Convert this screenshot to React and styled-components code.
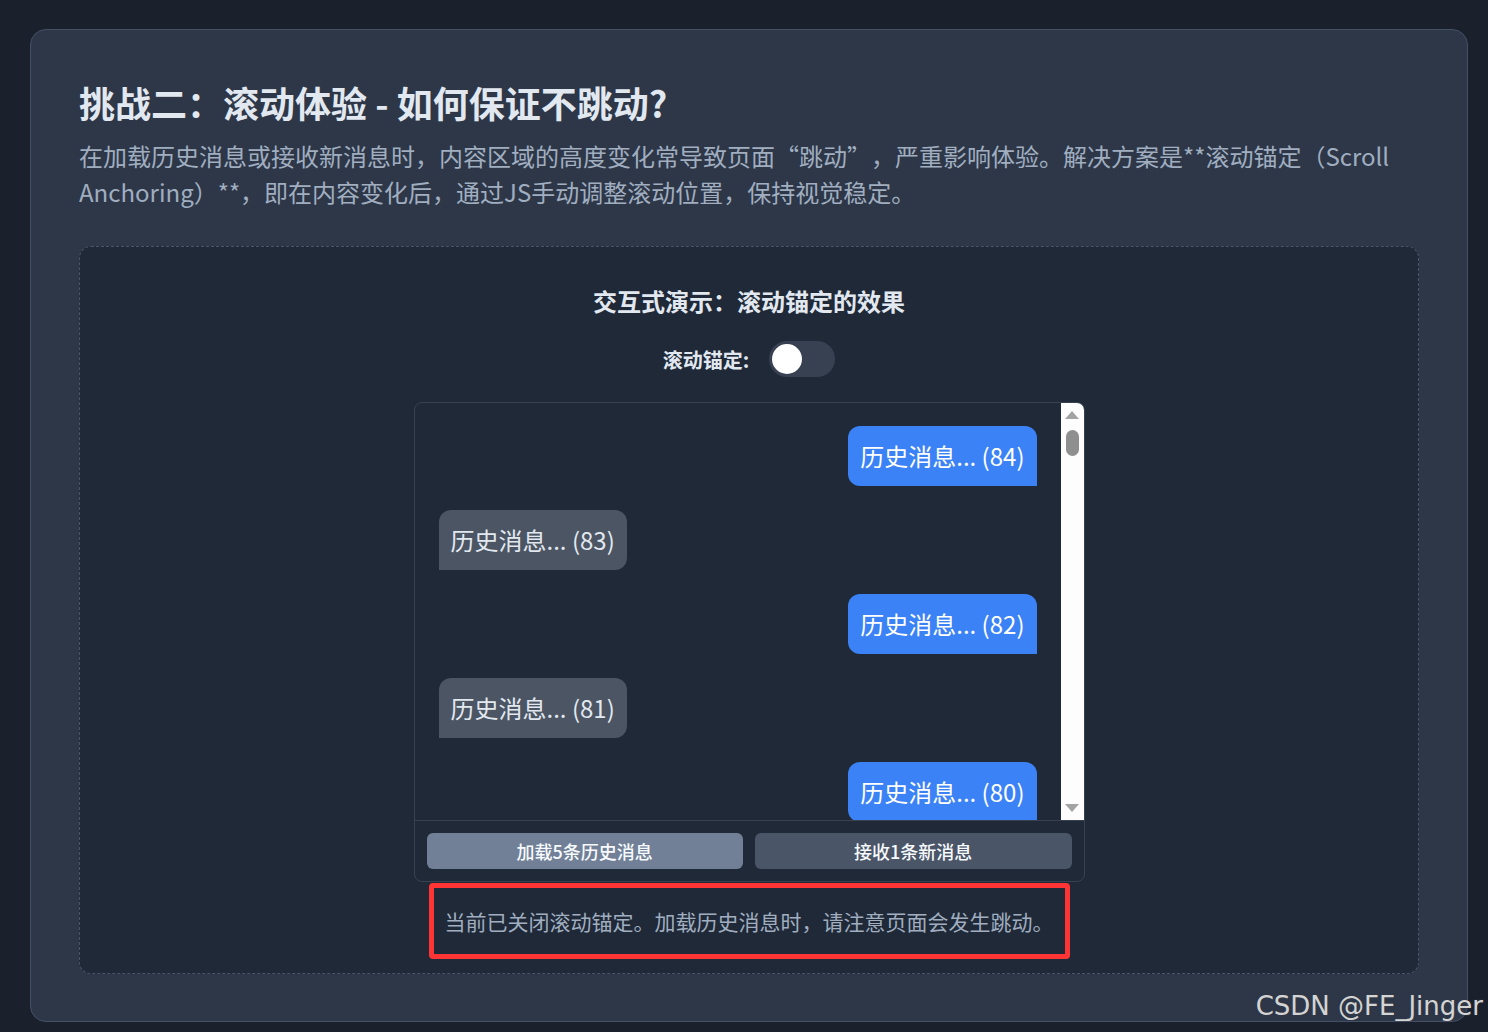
import React, { useState } from 'react'
import styled, { createGlobalStyle } from 'styled-components'

const GlobalStyle = createGlobalStyle`
  html, body {
    margin: 0;
    padding: 0;
    background: #1a202c;
    font-family: "Noto Sans CJK SC", "Noto Sans", sans-serif;
    text-spacing-trim: space-all;
  }
  * { box-sizing: border-box; }
`

const Page = styled.div`
  min-height: 1032px;
  padding: 29px 20px 10px 30px;
  position: relative;
`

const Card = styled.section`
  background: #2d3748;
  border: 1px solid #445066;
  border-radius: 16px;
  padding: 47px 48px 48px;
  height: 993px;
`

const Title = styled.h2`
  margin: 0 0 10px;
  font-size: 36px;
  line-height: 51px;
  font-weight: 700;
  color: #e2e8f0;
`

const Intro = styled.p`
  margin: 0 0 36px;
  font-size: 24px;
  line-height: 36px;
  color: #a0aec0;
`

const Demo = styled.div`
  border: 1px dashed #4a5568;
  border-radius: 12px;
  background: #1f2937;
  padding: 36px 24px 14px;
  display: flex;
  flex-direction: column;
  align-items: center;
`

const DemoTitle = styled.h3`
  margin: 0 0 22px;
  font-size: 24px;
  line-height: 36px;
  font-weight: 700;
  color: #e2e8f0;
`

const ToggleRow = styled.div`
  display: flex;
  align-items: center;
  gap: 20px;
  margin-bottom: 25px;
`

const ToggleLabel = styled.span`
  font-size: 20px;
  font-weight: 700;
  color: #e2e8f0;
`

const Switch = styled.button`
  width: 66px;
  height: 36px;
  border: none;
  border-radius: 18px;
  padding: 3px;
  background: ${p => (p.$on ? '#3b82f6' : '#374151')};
  display: flex;
  justify-content: ${p => (p.$on ? 'flex-end' : 'flex-start')};
  cursor: pointer;
`

const Knob = styled.span`
  width: 30px;
  height: 30px;
  border-radius: 50%;
  background: #ffffff;
`

const Chat = styled.div`
  width: 671px;
  border: 1px solid #374151;
  border-radius: 8px;
  overflow: hidden;
  background: #1f2937;
`

const ListRow = styled.div`
  display: flex;
  height: 417px;
`

const MessageList = styled.div`
  flex: 1;
  overflow-y: auto;
  padding: 23px 24px 0;
  display: flex;
  flex-direction: column;
  scrollbar-width: none;
  &::-webkit-scrollbar { display: none; }
`

const Bubble = styled.div`
  align-self: ${p => (p.$mine ? 'flex-end' : 'flex-start')};
  background: ${p => (p.$mine ? '#3b82f6' : '#4b5563')};
  color: ${p => (p.$mine ? '#ffffff' : '#e2e8f0')};
  font-size: 24px;
  line-height: 36px;
  padding: 12px;
  border-radius: ${p => (p.$mine ? '12px 12px 0 12px' : '12px 12px 12px 0')};
  margin-bottom: 24px;
  flex-shrink: 0;
  white-space: nowrap;
`

const ScrollTrack = styled.div`
  width: 23px;
  background: #fdfdfd;
  display: flex;
  flex-direction: column;
  align-items: center;
  padding: 8px 0;
`

const Arrow = styled.span`
  width: 0;
  height: 0;
  border-left: 7px solid transparent;
  border-right: 7px solid transparent;
  ${p => (p.$down ? 'border-top: 8px solid #a3a3a3;' : 'border-bottom: 8px solid #a3a3a3;')}
  ${p => (p.$down ? 'margin-top: auto;' : '')}
`

const Thumb = styled.span`
  width: 13px;
  height: 26px;
  border-radius: 7px;
  background: #8f8f8f;
  margin-top: 11px;
`

const Footer = styled.div`
  border-top: 1px solid #374151;
  padding: 12px;
  display: grid;
  grid-template-columns: 1fr 1fr;
  gap: 12px;
`

const ActionButton = styled.button`
  height: 36px;
  border: none;
  border-radius: 6px;
  background: ${p => (p.$primary ? '#718096' : '#4a5568')};
  color: #f7fafc;
  font-family: inherit;
  font-size: 18px;
  line-height: 26px;
  font-weight: 500;
  cursor: pointer;
`

const Status = styled.p`
  margin: 1px 0 0;
  width: 641px;
  border: 5px solid #ff3535;
  border-radius: 4px;
  padding: 18px 4px;
  text-align: center;
  font-size: 21px;
  line-height: 30px;
  color: #a0aec0;
`

const Watermark = styled.div`
  position: absolute;
  right: 5px;
  bottom: 11px;
  font-family: "DejaVu Sans", "Liberation Sans", sans-serif;
  font-size: 26px;
  color: #d4d4d4;
  text-shadow: 0 0 2px #3a3f4a;
`

const messages = Array.from({ length: 10 }, (_, i) => 84 - i)

export default function App() {
  const [anchor, setAnchor] = useState(false)
  return (
    <Page lang="zh-CN">
      <GlobalStyle />
      <Card>
        <Title>挑战二：滚动体验 - 如何保证不跳动?</Title>
        <Intro>
          在加载历史消息或接收新消息时，内容区域的高度变化常导致页面“跳动”，严重影响体验。解决方案是**滚动锚定（Scroll
          Anchoring）**，即在内容变化后，通过JS手动调整滚动位置，保持视觉稳定。
        </Intro>
        <Demo>
          <DemoTitle>交互式演示：滚动锚定的效果</DemoTitle>
          <ToggleRow>
            <ToggleLabel>滚动锚定:</ToggleLabel>
            <Switch $on={anchor} onClick={() => setAnchor(!anchor)}>
              <Knob />
            </Switch>
          </ToggleRow>
          <Chat>
            <ListRow>
              <MessageList>
                {messages.map(n => (
                  <Bubble key={n} $mine={n % 2 === 0}>
                    历史消息... ({n})
                  </Bubble>
                ))}
              </MessageList>
              <ScrollTrack>
                <Arrow />
                <Thumb />
                <Arrow $down />
              </ScrollTrack>
            </ListRow>
            <Footer>
              <ActionButton $primary>加载5条历史消息</ActionButton>
              <ActionButton>接收1条新消息</ActionButton>
            </Footer>
          </Chat>
          <Status>
            {anchor
              ? '当前已开启滚动锚定。加载历史消息时，页面将保持稳定。'
              : '当前已关闭滚动锚定。加载历史消息时，请注意页面会发生跳动。'}
          </Status>
        </Demo>
      </Card>
      <Watermark>CSDN @FE_Jinger</Watermark>
    </Page>
  )
}
